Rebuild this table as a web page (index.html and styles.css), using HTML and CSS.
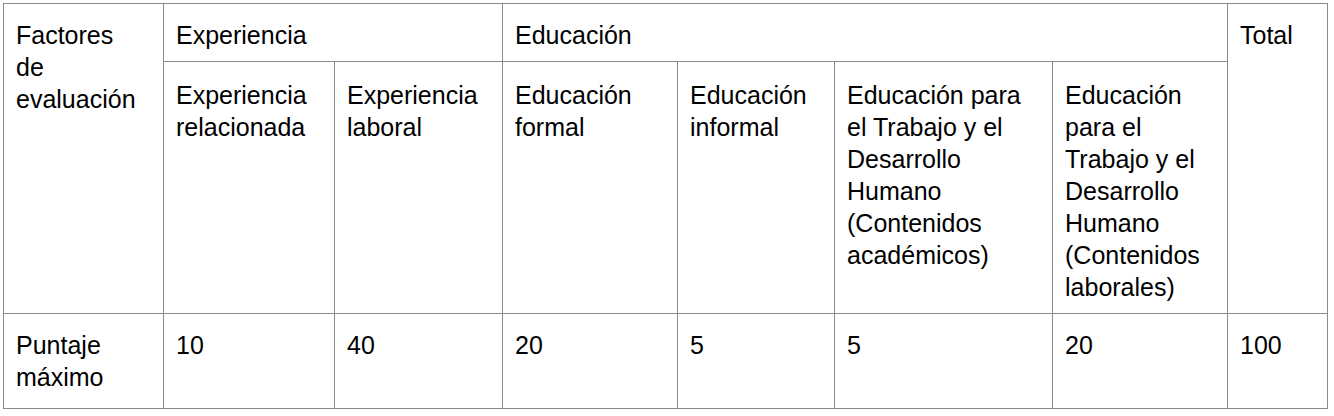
FILE: index.html
```html
<!DOCTYPE html>
<html lang="es">
<head>
<meta charset="utf-8">
<title>Factores de evaluación</title>
<link rel="stylesheet" href="styles.css">
</head>
<body>
<table class="grid">
  <colgroup>
    <col class="c1"><col class="c2"><col class="c3"><col class="c4"><col class="c5"><col class="c6"><col class="c7"><col class="c8">
  </colgroup>
  <tbody>
    <tr>
      <td rowspan="2" class="first">Factores de evaluación</td>
      <td colspan="2">Experiencia</td>
      <td colspan="4">Educación</td>
      <td rowspan="2">Total</td>
    </tr>
    <tr class="sub">
      <td>Experiencia relacionada</td>
      <td>Experiencia laboral</td>
      <td>Educación formal</td>
      <td>Educación informal</td>
      <td>Educación para el Trabajo y el Desarrollo Humano (Contenidos académicos)</td>
      <td>Educación para el Trabajo y el Desarrollo Humano (Contenidos laborales)</td>
    </tr>
    <tr class="score">
      <td class="first">Puntaje máximo</td>
      <td>10</td>
      <td>40</td>
      <td>20</td>
      <td>5</td>
      <td>5</td>
      <td>20</td>
      <td>100</td>
    </tr>
  </tbody>
</table>
</body>
</html>
```

FILE: styles.css
```css
html, body {
  margin: 0;
  padding: 0;
  background: #ffffff;
}

body {
  padding: 3px 0 0 3px;
  font-family: "Liberation Sans", Arial, Helvetica, sans-serif;
  color: #000000;
}

.grid {
  border-collapse: collapse;
  table-layout: fixed;
  width: 1324px;
  font-size: 25px;
  line-height: 32px;
}

.grid td {
  border: 1px solid #8a8a8a;
  padding: 15px 12px 10px 12px;
  vertical-align: top;
  text-align: left;
}

.grid .sub td {
  padding-top: 17px;
}

.grid .score td {
  padding-top: 15px;
  padding-bottom: 15px;
}

.grid td.first {
  padding-right: 17px;
}

.c1 { width: 160px; }
.c2 { width: 171px; }
.c3 { width: 168px; }
.c4 { width: 175px; }
.c5 { width: 157px; }
.c6 { width: 218px; }
.c7 { width: 175px; }
.c8 { width: 100px; }
```
